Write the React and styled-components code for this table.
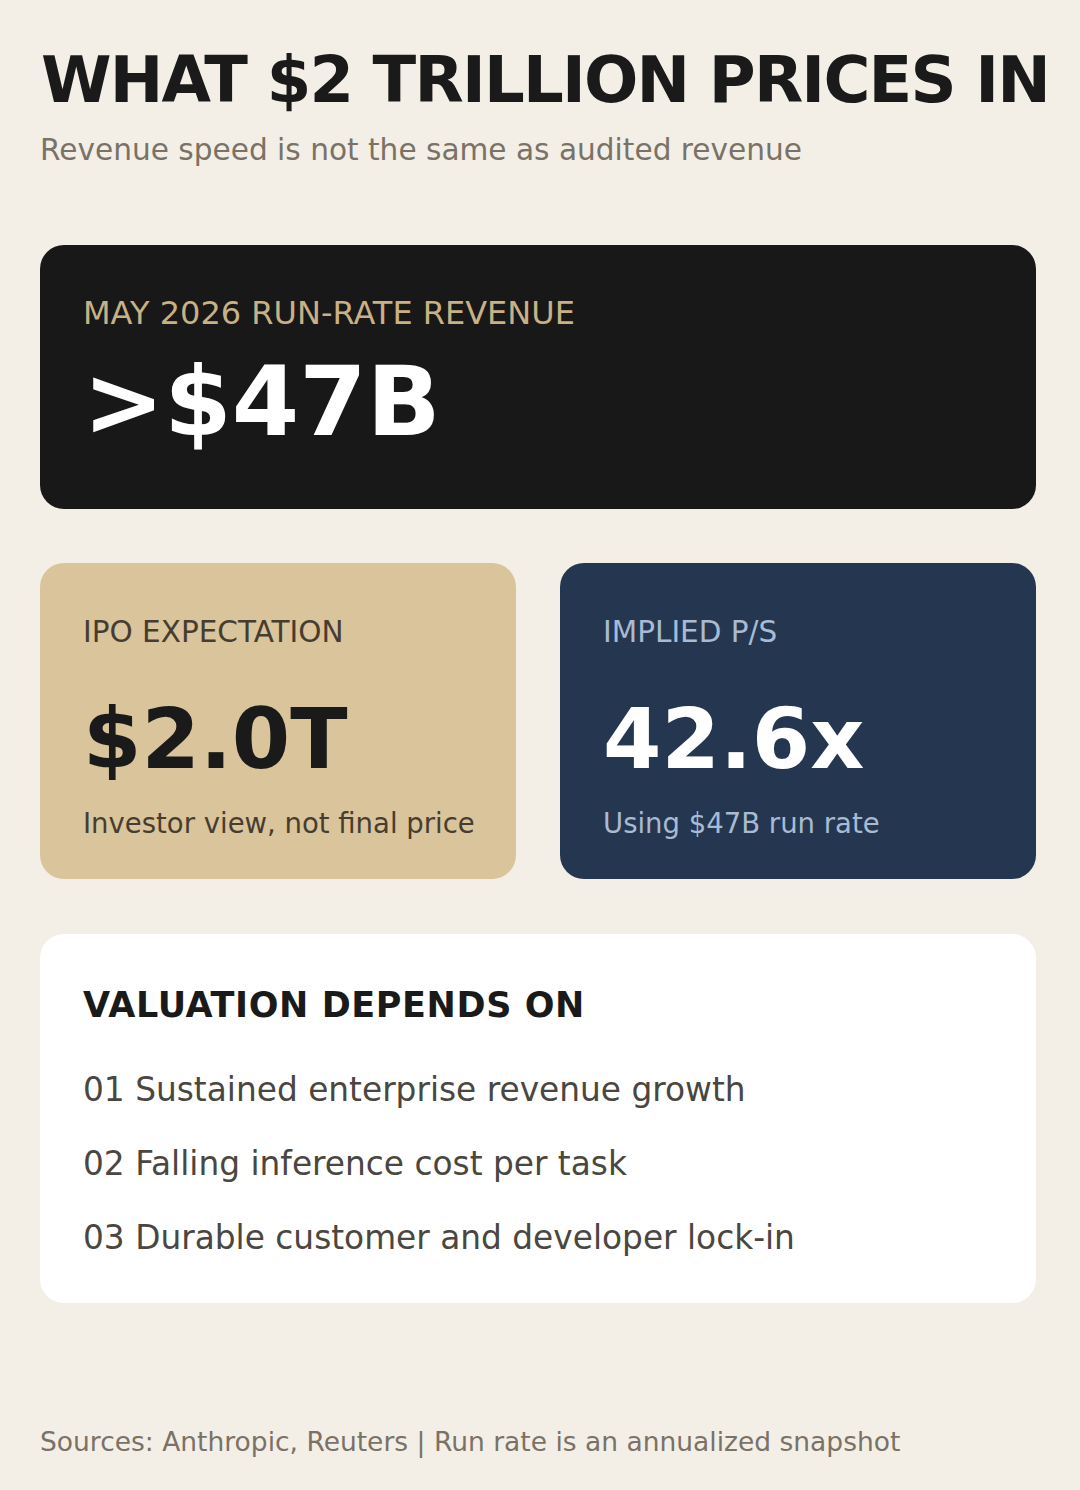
import React from 'react';
import styled, { createGlobalStyle } from 'styled-components';

const GlobalStyle = createGlobalStyle`
  html, body {
    margin: 0;
    padding: 0;
    background: #f3efe7;
  }
  body {
    font-family: "DejaVu Sans", "Liberation Sans", sans-serif;
  }
`;

const Page = styled.div`
  width: 1080px;
  min-height: 1490px;
  box-sizing: border-box;
  padding: 48px 44px 0 40px;
  background: #f3efe7;
`;

const Title = styled.h1`
  margin: 0 0 0 1px;
  font-size: 64px;
  line-height: 1;
  font-weight: 700;
  letter-spacing: -1.8px;
  color: #1a1a1a;
  white-space: nowrap;
`;

const Subtitle = styled.p`
  margin: 24px 0 0;
  font-size: 29.6px;
  line-height: 1;
  color: #7a7266;
`;

const Card = styled.div`
  box-sizing: border-box;
  min-width: 0;
  border-radius: 24px;
  background: ${({ $bg }) => $bg};
  padding: ${({ $pad }) => $pad};
`;

const Hero = styled(Card)`
  margin-top: 79px;
`;

const Row = styled.div`
  display: grid;
  grid-template-columns: minmax(0, 1fr) minmax(0, 1fr);
  gap: 44px;
  margin-top: 54px;
`;

const Label = styled.div`
  font-size: ${({ $size }) => $size}px;
  line-height: 1;
  color: ${({ $color }) => $color};
  white-space: nowrap;
`;

const BigValue = styled.div`
  margin-top: ${({ $gap }) => $gap}px;
  font-size: ${({ $size }) => $size}px;
  line-height: 1;
  font-weight: 700;
  color: ${({ $color }) => $color};
  white-space: nowrap;
`;

const Note = styled.div`
  margin-top: 28.5px;
  font-size: 27.5px;
  line-height: 1;
  color: ${({ $color }) => $color};
  white-space: nowrap;
`;

const ListCard = styled(Card)`
  margin-top: 55px;
`;

const ListHeading = styled.h2`
  margin: 0;
  font-size: 35px;
  line-height: 1;
  font-weight: 700;
  color: #1a1a1a;
  letter-spacing: 0.6px;
`;

const List = styled.ol`
  list-style: none;
  margin: 51px 0 0;
  padding: 0;
  display: flex;
  flex-direction: column;
  gap: 41px;
`;

const Item = styled.li`
  font-size: 32.8px;
  line-height: 1;
  color: #4a4640;
  white-space: nowrap;
`;

const Footer = styled.footer`
  margin-top: 126px;
  font-size: 26.5px;
  line-height: 1;
  color: #7a7266;
  white-space: nowrap;
`;

const drivers = [
  '01 Sustained enterprise revenue growth',
  '02 Falling inference cost per task',
  '03 Durable customer and developer lock-in',
];

export default function App() {
  return (
    <>
      <GlobalStyle />
      <Page>
        <Title>WHAT $2 TRILLION PRICES IN</Title>
        <Subtitle>Revenue speed is not the same as audited revenue</Subtitle>

        <Hero $bg="#181818" $pad="52px 44px 59px 43px">
          <Label $size={32} $color="#c8b184">MAY 2026 RUN-RATE REVENUE</Label>
          <BigValue $gap={24} $size={97} $color="#ffffff">&gt;$47B</BigValue>
        </Hero>

        <Row>
          <Card $bg="#d9c49b" $pad="55px 40px 42.2px 43px">
            <Label $size={29.5} $color="#463d30">IPO EXPECTATION</Label>
            <BigValue $gap={50} $size={84} $color="#1a1a1a">$2.0T</BigValue>
            <Note $color="#463d30">Investor view, not final price</Note>
          </Card>
          <Card $bg="#253750" $pad="55px 40px 42.2px 43px">
            <Label $size={29.5} $color="#a8bbd2">IMPLIED P/S</Label>
            <BigValue $gap={50} $size={84} $color="#ffffff">42.6x</BigValue>
            <Note $color="#a8bbd2">Using $47B run rate</Note>
          </Card>
        </Row>

        <ListCard $bg="#ffffff" $pad="54px 44px 48px 43px">
          <ListHeading>VALUATION DEPENDS ON</ListHeading>
          <List>
            {drivers.map((d) => (
              <Item key={d}>{d}</Item>
            ))}
          </List>
        </ListCard>

        <Footer>Sources: Anthropic, Reuters | Run rate is an annualized snapshot</Footer>
      </Page>
    </>
  );
}
